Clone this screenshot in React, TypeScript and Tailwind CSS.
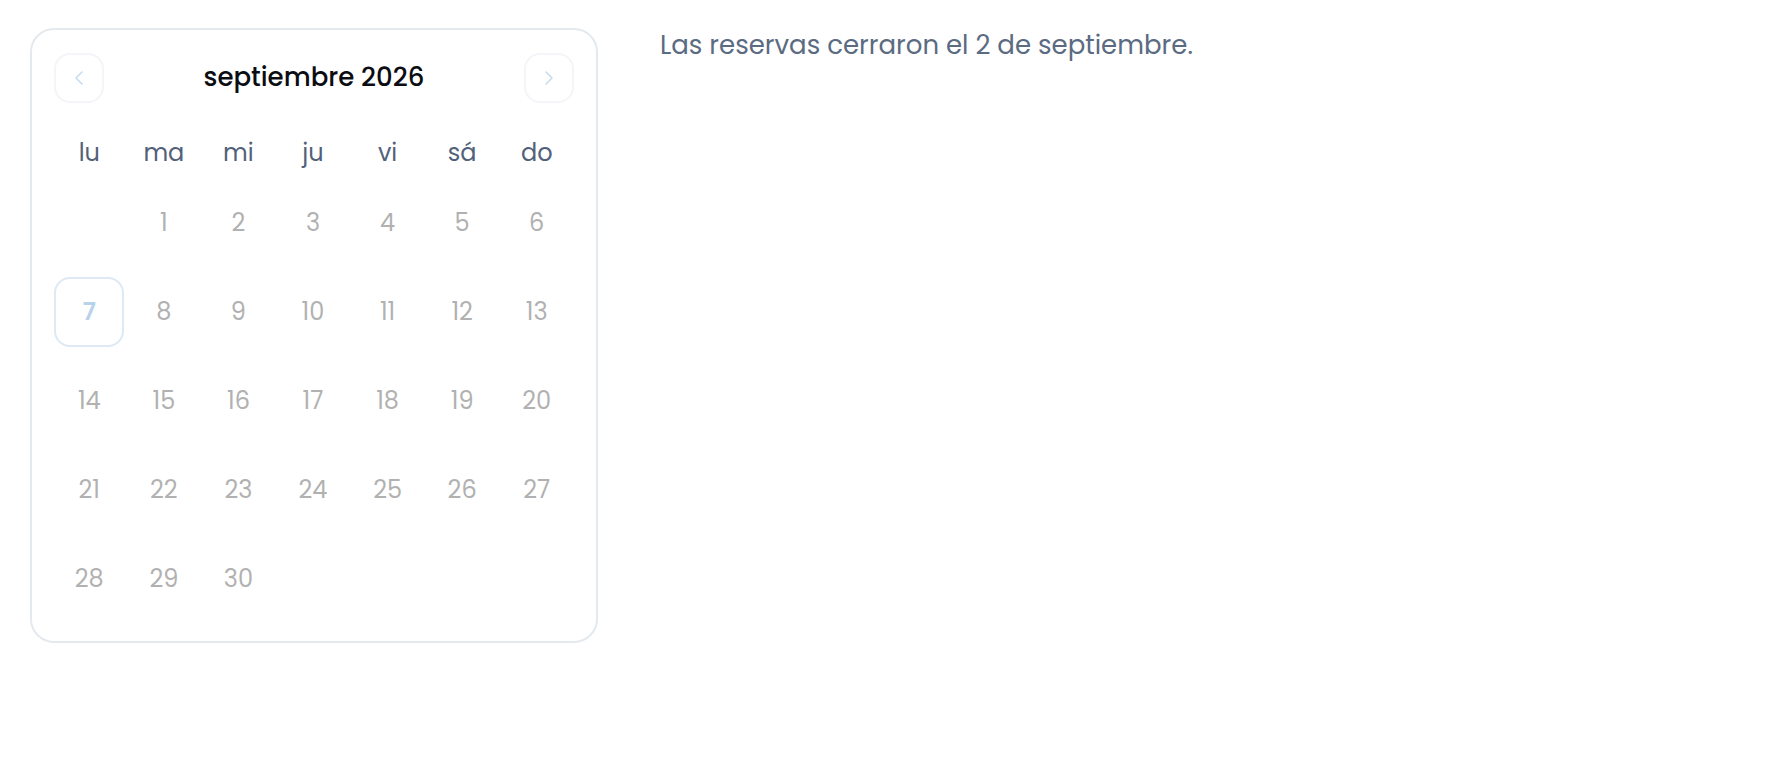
import React from 'react';
import { ChevronLeft, ChevronRight } from 'lucide-react';

const weekdays = ['lu', 'ma', 'mi', 'ju', 'vi', 'sá', 'do'];

// septiembre 2026 starts on a Tuesday
const cells: (number | null)[] = [null, ...Array.from({ length: 30 }, (_, i) => i + 1)];
while (cells.length % 7 !== 0) cells.push(null);

const SELECTED = 7;

const App: React.FC = () => {
  return (
    <div
      className="min-h-screen bg-white flex items-start gap-[62px] pt-[28px] pl-[30px]"
      style={{ fontFamily: 'Poppins, Inter, "Noto Sans", sans-serif' }}
    >
      <div className="w-[568px] shrink-0 rounded-[24px] border-2 border-[#e4e9ee] bg-white pl-[20px] pr-[22px] pt-[23px] pb-[27px]">
        {/* header */}
        <div className="flex items-center justify-between h-[50px] pl-[2px]">
          <button
            type="button"
            className="w-[50px] h-[50px] flex items-center justify-center rounded-2xl border-2 border-[#f3f5f8] text-[#c6daef]"
          >
            <ChevronLeft className="w-6 h-6" strokeWidth={1.5} />
          </button>
          <div className="text-[26px] font-medium text-[#0b0d12] -translate-y-[1px]">septiembre 2026</div>
          <button
            type="button"
            className="w-[50px] h-[50px] flex items-center justify-center rounded-2xl border-2 border-[#f3f5f8] text-[#c6daef]"
          >
            <ChevronRight className="w-6 h-6" strokeWidth={1.5} />
          </button>
        </div>

        {/* weekdays */}
        <div className="grid grid-cols-7 mt-[30px] h-10 items-center">
          {weekdays.map((d) => (
            <div key={d} className="text-center text-[24px] text-[#52617a]">
              {d}
            </div>
          ))}
        </div>

        {/* days */}
        <div className="grid grid-cols-7 auto-rows-[70px] gap-y-[19px] mt-[15px]">
          {cells.map((n, i) => (
            <div key={i} className="flex items-center justify-center">
              {n === SELECTED ? (
                <div className="w-[70px] h-[70px] flex items-center justify-center rounded-2xl border-2 border-[#dde9f4] text-[24px] font-semibold text-[#b8d2ec]">
                  {n}
                </div>
              ) : n ? (
                <span className="text-[24px] text-[#b1b1b1]">{n}</span>
              ) : null}
            </div>
          ))}
        </div>
      </div>

      <p className="text-[26px] text-[#5b6b82] leading-[34px]">Las reservas cerraron el 2 de septiembre.</p>
    </div>
  );
};

export default App;
